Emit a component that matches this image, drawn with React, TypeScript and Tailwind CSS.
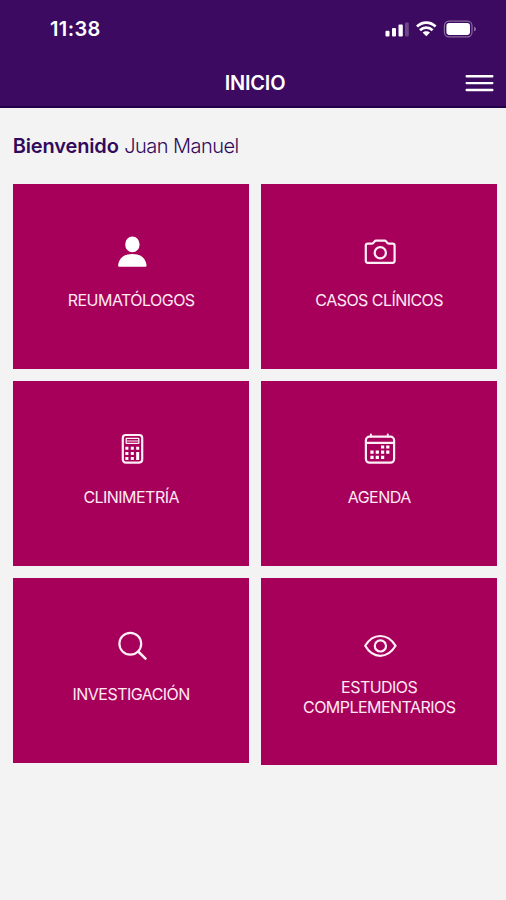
import type { ReactNode } from "react";

function StatusIcons() {
  return (
    <svg width="94" height="18" viewBox="0 0 94 18" fill="white" aria-hidden="true">
      <rect x="1.5" y="10.7" width="4" height="5.8" rx="1" />
      <rect x="8" y="8" width="4" height="8.5" rx="1" />
      <rect x="14.5" y="4.5" width="4.3" height="12" rx="1" />
      <rect x="21" y="2.5" width="3.8" height="14" rx="1" opacity="0.25" />
      <g fill="none" stroke="white" strokeWidth="2.8">
        <path d="M33 6.6C38.3 1.4 46.3 1.4 51.6 6.6" />
        <path d="M36 10.2C39.6 6.8 45 6.8 48.6 10.2" />
      </g>
      <path d="M42.3 16.2L38.6 12.6C40.6 10.8 44 10.8 46 12.6Z" />
      <rect x="60.4" y="1.1" width="27.6" height="15.8" rx="4.6" fill="none" stroke="white" strokeWidth="1.2" opacity="0.4" />
      <rect x="62.4" y="3.1" width="23.6" height="11.8" rx="2.8" />
      <path d="M90 6.7C92.7 7.4 92.7 10.6 90 11.3Z" opacity="0.4" />
    </svg>
  );
}

function Icon({ children }: { children: ReactNode }) {
  return (
    <svg
      width="36"
      height="32"
      viewBox="0 0 36 32"
      fill="none"
      stroke="#fff0f8"
      strokeWidth="2.2"
      strokeLinecap="round"
      strokeLinejoin="round"
      aria-hidden="true"
    >
      {children}
    </svg>
  );
}

const personIcon = (
  <Icon>
    <g fill="white" stroke="none">
      <ellipse cx="19.4" cy="9.4" rx="7.2" ry="7.9" />
      <path d="M6.6 31.8C5.4 31.8 4.9 31.1 5.2 29.8C6.3 22.9 11.3 18.9 19.4 18.9S32.4 22.9 33.5 29.8C33.8 31.1 33.3 31.8 32.1 31.8Z" />
    </g>
  </Icon>
);

const cameraIcon = (
  <Icon>
    <path d="M6.8 8.6H11C11.9 8.6 12.3 8.2 12.8 7.4L13.6 6.4C14 5.8 14.4 5.6 15.1 5.6H23.6C24.3 5.6 24.7 5.8 25.1 6.4L25.9 7.4C26.4 8.2 26.8 8.6 27.7 8.6H31.6C33 8.6 33.6 9.3 33.6 10.6V25.8C33.6 27.2 33 27.8 31.6 27.8H6.8C5.4 27.8 4.8 27.2 4.8 25.8V10.6C4.8 9.3 5.4 8.6 6.8 8.6Z" />
    <circle cx="19.3" cy="17.8" r="5.6" />
  </Icon>
);

const calculatorIcon = (
  <Icon>
    <rect x="9.8" y="3" width="19.4" height="27.6" rx="3" />
    <rect x="13.2" y="6.4" width="12.6" height="5" rx="0.5" strokeWidth="1.3" />
    <path d="M14.5 8.9H24.4" strokeWidth="2" opacity="0.5" />
    <path
      d="M12.4 14.8h3v3h-3zM17.8 14.8h3v3h-3zM23.2 14.8h3v3h-3zM12.4 19.9h3v3h-3zM17.8 19.9h3v3h-3zM12.4 25h3v3h-3zM17.8 25h3v3h-3zM23.2 19.9h3v8.1h-3z"
      fill="white"
      stroke="none"
    />
  </Icon>
);

const calendarIcon = (
  <Icon>
    <rect x="4.9" y="4.7" width="28.2" height="26" rx="3.6" />
    <path d="M5.2 10.8H32.8" />
    <path d="M9.9 2.6V4.6M26.8 2.6V4.6" strokeWidth="2" />
    <path
      d="M20 13.4h3.2v3.2h-3.2zM25.2 13.4h3.2v3.2h-3.2zM9.4 18.6h3.2v3.2h-3.2zM14.7 18.6h3.2v3.2h-3.2zM20 18.6h3.2v3.2h-3.2zM25.2 18.6h3.2v3.2h-3.2zM9.4 23.8h3.2v3.2h-3.2zM14.7 23.8h3.2v3.2h-3.2zM20 23.8h3.2v3.2h-3.2z"
      fill="white"
      stroke="none"
    />
  </Icon>
);

const searchIcon = (
  <Icon>
    <circle cx="17.3" cy="14.7" r="10.9" />
    <path d="M25.2 22.5L32.5 29.6" strokeWidth="2.5" />
  </Icon>
);

const eyeIcon = (
  <Icon>
    <path d="M4.2 16.8C7.9 10.6 13.3 7 19.3 7S30.7 10.6 34.6 16.8C30.7 23.2 25.3 26.8 19.3 26.8S7.9 23.2 4.2 16.8Z" />
    <circle cx="19.4" cy="16.9" r="5.6" />
  </Icon>
);

const menuItems = [
  { id: "reumatologos", lines: ["REUMATÓLOGOS"], icon: personIcon },
  { id: "casos", lines: ["CASOS CLÍNICOS"], icon: cameraIcon },
  { id: "clinimetria", lines: ["CLINIMETRÍA"], icon: calculatorIcon },
  { id: "agenda", lines: ["AGENDA"], icon: calendarIcon },
  { id: "investigacion", lines: ["INVESTIGACIÓN"], icon: searchIcon },
  { id: "estudios", lines: ["ESTUDIOS", "COMPLEMENTARIOS"], icon: eyeIcon },
];

function MenuCard({ lines, icon }: { lines: string[]; icon: ReactNode }) {
  const tall = lines.length > 1;
  return (
    <button
      type="button"
      className={`flex flex-col items-center bg-[#a7005b] pt-[51px] text-[#ffe9f4] ${tall ? "h-[187px]" : "h-[185px]"}`}
    >
      {icon}
      <span className={`flex flex-col pl-px text-center text-base leading-5 tracking-[-0.54px] ${tall ? "mt-4" : "mt-[23px]"}`}>
        {lines.map((line) => (
          <span key={line}>{line}</span>
        ))}
      </span>
    </button>
  );
}

export default function App() {
  return (
    <div className="min-h-[900px] w-full bg-[#f3f3f3] font-['Inter',sans-serif]">
      <header className="h-[108px] border-b-2 border-[#220047] bg-[#3c0a60] text-white">
        <div className="flex h-[58px] items-center justify-between pr-7 pl-[50px]">
          <span className="text-xl font-semibold tracking-[0.4px]">11:38</span>
          <StatusIcons />
        </div>
        <div className="grid h-12 grid-cols-[1fr_auto_1fr] items-center pr-3 pl-4">
          <h1 className="col-start-2 pt-px text-xl font-semibold tracking-[-0.2px]">INICIO</h1>
          <button type="button" aria-label="Menú" className="justify-self-end pt-px">
            <svg width="29" height="18" viewBox="0 0 29 18" stroke="white" strokeWidth="2.4" strokeLinecap="round">
              <path d="M1.7 2.2H27.3M1.7 9.1H27.3M1.7 16H27.3" />
            </svg>
          </button>
        </div>
      </header>
      <main className="pt-6 pl-[12.7px]">
        <p className="h-[52px] text-xl leading-7 text-[#320a5c]">
          <span className="font-semibold tracking-[-0.15px]">Bienvenido</span>{" "}
          <span className="font-light tracking-[-0.55px]">Juan Manuel</span>
        </p>
        <div className="grid w-[484px] grid-cols-2 items-start gap-3">
          {menuItems.map((item) => (
            <MenuCard key={item.id} lines={item.lines} icon={item.icon} />
          ))}
        </div>
      </main>
    </div>
  );
}
